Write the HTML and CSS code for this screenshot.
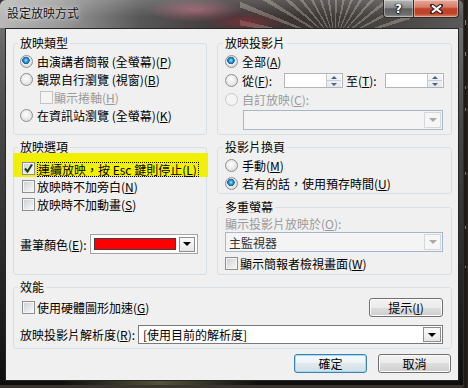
FILE: index.html
```html
<!DOCTYPE html>
<html lang="zh-Hant">
<head>
    <meta charset="UTF-8">
    <title>設定放映方式</title>
    <link rel="stylesheet" href="styles.css">
</head>
<body>
    <div class="window">
        <div class="titlebar">
            <span class="title">設定放映方式</span>
            <div class="caption">
                <span class="cap cap-help">?</span>
                <span class="cap cap-close">
                    <svg width="13" height="10" viewBox="0 0 13 10">
                        <path d="M2 1.5L11 8.5M11 1.5L2 8.5" stroke="#3a2622" stroke-width="4.2" stroke-linecap="round"/>
                        <path d="M2 1.5L11 8.5M11 1.5L2 8.5" stroke="#fff" stroke-width="2.2"/>
                    </svg>
                </span>
            </div>
        </div>
        <div class="frame">
            <div class="client">
                <div class="groups">
                    <fieldset class="group g-type">
                        <legend>放映類型</legend>
                        <div class="row"><span class="radio on"></span>由演講者簡報 (全螢幕)(<u>P</u>)</div>
                        <div class="row"><span class="radio"></span>觀眾自行瀏覽 (視窗)(<u>B</u>)</div>
                        <div class="row sub dim"><span class="check dis"></span>顯示捲軸(<u>H</u>)</div>
                        <div class="row"><span class="radio"></span>在資訊站瀏覽 (全螢幕)(<u>K</u>)</div>
                    </fieldset>

                    <fieldset class="group g-slides">
                        <legend>放映投影片</legend>
                        <div class="row"><span class="radio on"></span>全部(<u>A</u>)</div>
                        <div class="row">
                            <span class="radio"></span>
                            <span class="lbl-from">從(<u>F</u>):</span>
                            <span class="spin"><span class="spin-btns"><i class="up"></i><i class="down"></i></span></span>
                            <span class="lbl-to">至(<u>T</u>):</span>
                            <span class="spin"><span class="spin-btns"><i class="up"></i><i class="down"></i></span></span>
                        </div>
                        <div class="row dim"><span class="radio dis"></span>自訂放映(<u>C</u>):</div>
                        <div class="combo soft custom"><span class="combo-text"></span><span class="drop dis"></span></div>
                    </fieldset>

                    <fieldset class="group g-options">
                        <legend>放映選項</legend>
                        <div class="hl">
                            <span class="check">
                                <svg width="11" height="11" viewBox="0 0 11 11"><path d="M2 5.5L4.5 8.5L9 1.5" fill="none" stroke="#1d3a12" stroke-width="2"/></svg>
                            </span>
                            <span class="focus">連續放映，按 Esc 鍵則停止(<u>L</u>)</span>
                        </div>
                        <div class="row opt"><span class="check"></span>放映時不加旁白(<u>N</u>)</div>
                        <div class="row opt"><span class="check"></span>放映時不加動畫(<u>S</u>)</div>
                        <div class="pen">
                            <span class="pen-label">畫筆顏色(<u>E</u>):</span>
                            <span class="color-pick"><span class="swatch"></span><span class="drop"></span></span>
                        </div>
                    </fieldset>

                    <div class="stack">
                        <fieldset class="group g-advance">
                            <legend>投影片換頁</legend>
                            <div class="row"><span class="radio"></span>手動(<u>M</u>)</div>
                            <div class="row"><span class="radio on"></span>若有的話，使用預存時間(<u>U</u>)</div>
                        </fieldset>
                        <fieldset class="group g-monitors">
                            <legend>多重螢幕</legend>
                            <div class="mon-label dim">顯示投影片放映於(<u>O</u>):</div>
                            <div class="combo soft monitor"><span class="combo-text">主監視器</span><span class="drop dis"></span></div>
                            <div class="row presenter"><span class="check"></span>顯示簡報者檢視畫面(<u>W</u>)</div>
                        </fieldset>
                    </div>
                </div>

                <fieldset class="group g-perf">
                    <legend>效能</legend>
                    <div class="perf-row">
                        <span class="row"><span class="check"></span>使用硬體圖形加速(<u>G</u>)</span>
                        <button class="btn tip">提示(<u>I</u>)</button>
                    </div>
                    <div class="perf-row res">
                        <span class="res-label">放映投影片解析度(<u>R</u>):</span>
                        <div class="combo resolution"><span class="combo-text">[使用目前的解析度]</span><span class="drop"></span></div>
                    </div>
                </fieldset>

                <div class="actions">
                    <button class="btn default">確定</button>
                    <button class="btn">取消</button>
                </div>
            </div>
        </div>
    </div>
</body>
</html>
```

FILE: styles.css
```css
* {
    box-sizing: border-box;
}
body {
    margin: 0;
    width: 468px;
    height: 388px;
    overflow: hidden;
    font-family: "Noto Sans CJK TC", "Liberation Sans", sans-serif;
    font-size: 12px;
    color: #000;
    background:
        linear-gradient(to bottom,
            transparent 20px, #e0601e 20px 25px, transparent 25px 52px, #d4581c 52px 56px,
            transparent 56px 86px, #c8501a 86px 89px, transparent 89px 108px, #d4581c 108px 111px,
            transparent 111px 172px, #c8501a 172px 175px, transparent 175px 226px, #d4581c 226px 229px,
            transparent 229px 266px, #c8501a 266px 268px, transparent 268px) 465px 0 / 1px 388px no-repeat,
        linear-gradient(to right, #3a3430 463px, #1b1512 465px, #2c2622 468px);
}
.window {
    width: 463px;
    height: 385px;
    display: flex;
    flex-direction: column;
    border-radius: 6px 6px 0 0;
    overflow: hidden;
    background: linear-gradient(#7a7a7a, #4a4a4a 30%, #202020 80%, #0e0e0e);
}
.titlebar {
    height: 28px;
    flex: none;
    display: flex;
    justify-content: space-between;
    align-items: flex-start;
    padding: 0 4px 0 7px;
    background:
        linear-gradient(rgba(255, 255, 255, 0.18), rgba(255, 255, 255, 0) 60%),
        radial-gradient(ellipse 48px 12px at 195px 10px, rgba(200, 110, 130, 0.6), transparent),
        radial-gradient(ellipse 40px 10px at 245px 22px, rgba(160, 50, 60, 0.55), transparent),
        repeating-conic-gradient(from 250deg at 95px 42px, rgba(220, 210, 190, 0.32) 0deg 3deg, transparent 3deg 10deg) 240px 0 / 170px 28px no-repeat,
        linear-gradient(to right, #b8b8b8 0, #9a9a9a 60px, #575757 140px, #3e3638 230px, #3a3432 300px, #4a4846 400px, #5a5a5a 463px);
}
.title {
    line-height: 26px;
    color: #111;
    text-shadow: 0 0 6px rgba(255, 255, 255, 0.8), 0 0 2px rgba(255, 255, 255, 0.7);
}
.caption {
    display: flex;
}
.cap {
    height: 18px;
    display: flex;
    align-items: center;
    justify-content: center;
    border: 1px solid #2c2c2c;
    border-top: none;
    box-shadow: inset 0 0 0 1px rgba(255, 255, 255, 0.35);
}
.cap-help {
    width: 30px;
    border-radius: 0 0 0 4px;
    border-right: none;
    background: linear-gradient(#b6b6b6, #8c8c8c 45%, #5e5e5e 52%, #6e6e6e 85%, #9a9a9a);
    font-family: "DejaVu Sans", sans-serif;
    font-weight: bold;
    font-size: 12px;
    color: #fff;
    text-shadow: 0 0 1px #222, 1px 0 1px #222, -1px 0 1px #222, 0 1px 1px #222;
}
.cap-close {
    width: 46px;
    border-radius: 0 0 4px 0;
    background: linear-gradient(#e7aa9c, #d67c66 42%, #c1402a 52%, #bf4428 80%, #e08a6c);
}
.frame {
    flex: 1;
    display: flex;
    padding: 0 4px 4px 5px;
    background: linear-gradient(to right, transparent 60px, rgba(150, 150, 100, 0.5) 160px, transparent 260px) 0 100% / 100% 4px no-repeat;
}
.client {
    flex: 1;
    border: 1px solid #262626;
    background: #f0f0f0;
    display: flex;
    flex-direction: column;
}
.groups {
    display: grid;
    grid-template-columns: 194px 235px;
    grid-template-rows: 99px 135px;
    column-gap: 10px;
    row-gap: 5px;
    padding: 7px 6px 0 7px;
}
.group {
    margin: 0;
    min-width: 0;
    border: 1px solid #d5dfe5;
    border-radius: 3px;
    padding: 0 0 0 6px;
}
.group legend {
    padding: 0 2px;
    margin-left: -2px;
    line-height: 14px;
}
.g-slides, .g-advance, .g-monitors {
    padding-left: 7px;
}
.stack {
    display: flex;
    flex-direction: column;
    gap: 6px;
}
.row {
    display: flex;
    align-items: center;
    height: 18px;
    white-space: nowrap;
}
.dim {
    color: #9a9a9a;
}
.radio {
    flex: none;
    width: 13px;
    height: 13px;
    margin-right: 4px;
    border-radius: 50%;
    border: 1px solid #8d8f91;
    background: radial-gradient(circle at 45% 40%, #ffffff 0, #f0f0f0 35%, #cfd1d3 100%);
}
.radio.on {
    background:
        radial-gradient(circle at 45% 40%, #b4ecff 0, #3aa6e4 1.5px, #14609e 3.5px, rgba(20, 96, 158, 0) 4px),
        radial-gradient(circle at 45% 40%, #ffffff 0, #f0f0f0 35%, #cfd1d3 100%);
}
.radio.dis {
    border-color: #c6c8ca;
    background: #f4f4f4;
}
.check {
    flex: none;
    width: 13px;
    height: 13px;
    margin-right: 2px;
    border: 1px solid #8e8f8f;
    background: linear-gradient(135deg, #c9ccd1, #f2f3f4 80%);
    box-shadow: inset 0 0 0 1px #f4f4f4;
    display: flex;
    align-items: center;
    justify-content: center;
}
.check.dis {
    border-color: #c4c4c4;
    background: #f4f4f4;
    box-shadow: none;
}

.g-type {
    padding-top: 2px;
}
.g-type .sub {
    padding-left: 20px;
}
.g-type .sub .check {
    margin-right: 1px;
}

.g-slides {
    padding-top: 2px;
}
.g-slides .row {
    height: 19px;
}
.lbl-from {
    width: 42px;
}
.lbl-to {
    width: 39px;
    margin-left: 3px;
}
.spin {
    width: 59px;
    height: 15px;
    border: 1px solid #b2b4b8;
    background: #fff;
    display: flex;
    justify-content: flex-end;
    padding: 0 1px 0 0;
}
.spin-btns {
    width: 15px;
    display: flex;
    flex-direction: column;
    border-left: 1px solid #c6cbd2;
    background: linear-gradient(#f6f7f9, #e4e8ee);
}
.spin-btns i {
    flex: 1;
    display: flex;
    align-items: center;
    justify-content: center;
}
.spin-btns i.up {
    border-bottom: 1px solid #c6cbd2;
}
.spin-btns i.up::after {
    content: "";
    border-left: 3px solid transparent;
    border-right: 3px solid transparent;
    border-bottom: 3px solid #4d6185;
}
.spin-btns i.down::after {
    content: "";
    border-left: 3px solid transparent;
    border-right: 3px solid transparent;
    border-top: 3px solid #4d6185;
}

.combo {
    display: flex;
    align-items: center;
    height: 20px;
    border: 1px solid #7a7a7a;
    background: #fff;
    padding: 1px;
}
.combo.soft {
    border-color: #a6b7cc;
    background: #f4f4f4;
}
.combo-text {
    flex: 1;
    padding-left: 2px;
    white-space: nowrap;
}
.custom {
    width: 200px;
    margin: 1px 0 0 18px;
}
.drop {
    flex: none;
    width: 17px;
    height: 16px;
    border: 1px solid #9a9a9a;
    background: linear-gradient(#fbfbfb, #e6e6e6);
    display: flex;
    align-items: center;
    justify-content: center;
}
.drop::after {
    content: "";
    border-left: 4px solid transparent;
    border-right: 4px solid transparent;
    border-top: 4px solid #000;
}
.drop.dis {
    border-color: #d4d8dc;
    background: #f6f6f6;
}
.drop.dis::after {
    border-top-color: #a8a8a8;
}

.g-options .hl {
    display: flex;
    align-items: flex-start;
    height: 24px;
    margin: -1px -2px 0 -7px;
    padding: 9px 0 0 9px;
    background: #f0f000;
}
.g-options .hl .check {
    margin-right: 2px;
}
.focus {
    height: 15px;
    line-height: 13px;
    border: 1px dotted #000;
    padding: 0 1px 0 0;
    white-space: nowrap;
}
.g-options .opt {
    margin-left: 2px;
}
.g-options .opt .check {
    margin-right: 2px;
}
.pen {
    display: flex;
    align-items: center;
    margin-top: 21px;
    height: 20px;
}
.pen-label {
    width: 70px;
    white-space: nowrap;
}
.color-pick {
    width: 108px;
    height: 20px;
    display: flex;
    align-items: center;
    gap: 2px;
    padding: 0 2px 0 3px;
    border: 1px solid #a5a5a5;
    background: #fff;
}
.swatch {
    width: 83px;
    height: 12px;
    border: 1px solid #3c3c3c;
    background: #ff0000;
}
.color-pick .drop {
    width: 16px;
    height: 15px;
    margin-left: 1px;
    border-color: #8c8c8c;
}

.g-advance {
    padding-top: 2px;
}
.g-monitors {
    padding-top: 1px;
}
.mon-label {
    height: 17px;
    line-height: 17px;
    white-space: nowrap;
}
.monitor {
    width: 218px;
}
.monitor .combo-text {
    color: #333;
}
.presenter {
    margin-top: 2px;
}

.g-perf {
    height: 69px;
    margin: 5px 6px 0 7px;
    padding: 4px 8px 0 6px;
}
.perf-row {
    display: flex;
    align-items: center;
    justify-content: space-between;
    height: 19px;
}
.perf-row .row {
    margin-left: 2px;
}
.perf-row.res {
    margin-top: 8px;
}
.res-label {
    width: 118px;
    white-space: nowrap;
}
.resolution {
    flex: 1;
    height: 19px;
}
.resolution .combo-text {
    padding-left: 3px;
}
.resolution .drop {
    width: 18px;
    height: 15px;
    border-color: #8c8c8c;
}

.g-type, .g-slides {
    height: 99px;
}
.g-options {
    height: 135px;
}
.g-advance {
    height: 54px;
}
.g-monitors {
    height: 75px;
}

.btn {
    width: 73px;
    height: 19px;
    padding: 0;
    font-family: inherit;
    font-size: 12px;
    color: #000;
    border: 1px solid #707070;
    border-radius: 3px;
    background: linear-gradient(#f2f2f2, #ebebeb 50%, #dddddd 50%, #cfcfcf);
    box-shadow: inset 0 0 0 1px #fcfcfc;
    line-height: 17px;
}
.btn.tip {
    width: 74px;
}
.btn.default {
    border-color: #3c7fb1;
    box-shadow: inset 0 0 0 1px #9fdcf6;
    background: linear-gradient(#f4f9fc, #ecf3f7 50%, #e0e9ee 50%, #d4dfe6);
}
.actions {
    display: flex;
    justify-content: flex-end;
    gap: 11px;
    margin-top: 5px;
    padding-right: 7px;
}
```
